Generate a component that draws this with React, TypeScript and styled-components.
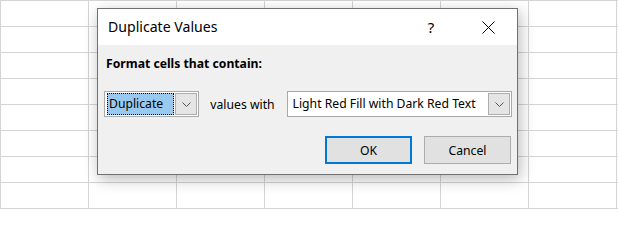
import React from "react";
import styled, { createGlobalStyle } from "styled-components";

const GlobalStyle = createGlobalStyle`
  html, body { margin: 0; padding: 0; background: #ffffff; }
  body { font-family: "Noto Sans", "Open Sans", sans-serif; color: #000; }
  * { box-sizing: border-box; }
`;

const Page = styled.div`
  position: relative;
  width: 618px;
  height: 209px;
  overflow: hidden;
  background: #ffffff;
`;

const Sheet = styled.div`
  display: grid;
  grid-template-columns: repeat(8, 88px);
  grid-auto-rows: 26px;
`;

const Cell = styled.div`
  border-left: 1px solid #d4d4d4;
  border-top: 1px solid #d4d4d4;
`;

const Dialog = styled.div`
  position: absolute;
  left: 97px;
  top: 8px;
  width: 421px;
  height: 167px;
  border: 1px solid #707070;
  background: #f0f0f0;
  box-shadow: 2px 4px 14px rgba(0, 0, 0, 0.28);
  display: flex;
  flex-direction: column;
`;

const TitleBar = styled.div`
  height: 36px;
  background: #ffffff;
  display: flex;
  align-items: center;
  padding-left: 10px;
`;

const Title = styled.div`
  flex: 1;
  font-size: 14.1px;
  color: #000;
  padding-bottom: 1px;
`;

const TitleButton = styled.div<{ $w: number }>`
  width: ${(p) => p.$w}px;
  height: 36px;
  display: flex;
  align-items: center;
  justify-content: center;
  font-size: 15px;
  color: #000;
`;

const TitleButtons = styled.div`
  display: flex;
  gap: 27px;
  margin-right: 14px;
`;

const Body = styled.div`
  flex: 1;
  display: flex;
  flex-direction: column;
  padding: 10px 5px 10px 6px;
`;

const Heading = styled.div`
  font-size: 12.2px;
  font-weight: 700;
  line-height: 18px;
  margin-left: 2px;
`;

const Row = styled.div`
  display: flex;
  align-items: center;
  margin-top: 18px;
  height: 26px;
`;

const Combo = styled.div<{ $w: number }>`
  width: ${(p) => p.$w}px;
  height: 26px;
  border: 1px solid #a9a9a9;
  background: #ffffff;
  display: flex;
  padding: 1px 1px 1px 2px;
  gap: 1px;
`;

const ComboText = styled.div<{ $selected?: boolean }>`
  flex: 1;
  font-size: 12.2px;
  line-height: 20px;
  padding-left: ${(p) => (p.$selected ? "1px" : "2px")};
  white-space: nowrap;
  overflow: hidden;
  background: ${(p) => (p.$selected ? "#99c9ef" : "transparent")};
  border: 1px ${(p) => (p.$selected ? "dotted #000" : "solid transparent")};
`;

const DropButton = styled.div`
  width: 22px;
  border: 1px solid #adadad;
  background: #e5e5e5;
  display: flex;
  align-items: center;
  justify-content: center;
`;

const Label = styled.div`
  font-size: 12.2px;
  margin: 0 12px 0 11px;
  white-space: nowrap;
`;

const Footer = styled.div`
  display: flex;
  justify-content: flex-end;
  gap: 12px;
  margin-top: 19px;
  padding-right: 1px;
`;

const Button = styled.div<{ $default?: boolean }>`
  width: 87px;
  height: 28px;
  background: #e1e1e1;
  border: ${(p) => (p.$default ? "2px solid #0078d7" : "1px solid #adadad")};
  display: flex;
  align-items: center;
  justify-content: center;
  font-size: 12.2px;
`;

const Chevron = () => (
  <svg width="9" height="5" viewBox="0 0 9 5">
    <polyline points="0.5,0.5 4.5,4.5 8.5,0.5" fill="none" stroke="#555" strokeWidth="1" />
  </svg>
);

const CloseIcon = () => (
  <svg width="13" height="13" viewBox="0 0 13 13">
    <line x1="0.5" y1="0.5" x2="12.5" y2="12.5" stroke="#000" strokeWidth="1" />
    <line x1="12.5" y1="0.5" x2="0.5" y2="12.5" stroke="#000" strokeWidth="1" />
  </svg>
);

export default function App() {
  const cells = Array.from({ length: 8 * 9 });
  return (
    <Page>
      <GlobalStyle />
      <Sheet>
        {cells.map((_, i) => (
          <Cell key={i} />
        ))}
      </Sheet>
      <Dialog>
        <TitleBar>
          <Title>Duplicate Values</Title>
          <TitleButtons>
            <TitleButton $w={30}>?</TitleButton>
            <TitleButton $w={30}>
              <CloseIcon />
            </TitleButton>
          </TitleButtons>
        </TitleBar>
        <Body>
          <Heading>Format cells that contain:</Heading>
          <Row>
            <Combo $w={96}>
              <ComboText $selected>Duplicate</ComboText>
              <DropButton>
                <Chevron />
              </DropButton>
            </Combo>
            <Label>values with</Label>
            <Combo $w={227}>
              <ComboText>Light Red Fill with Dark Red Text</ComboText>
              <DropButton>
                <Chevron />
              </DropButton>
            </Combo>
          </Row>
          <Footer>
            <Button $default>OK</Button>
            <Button>Cancel</Button>
          </Footer>
        </Body>
      </Dialog>
    </Page>
  );
}
